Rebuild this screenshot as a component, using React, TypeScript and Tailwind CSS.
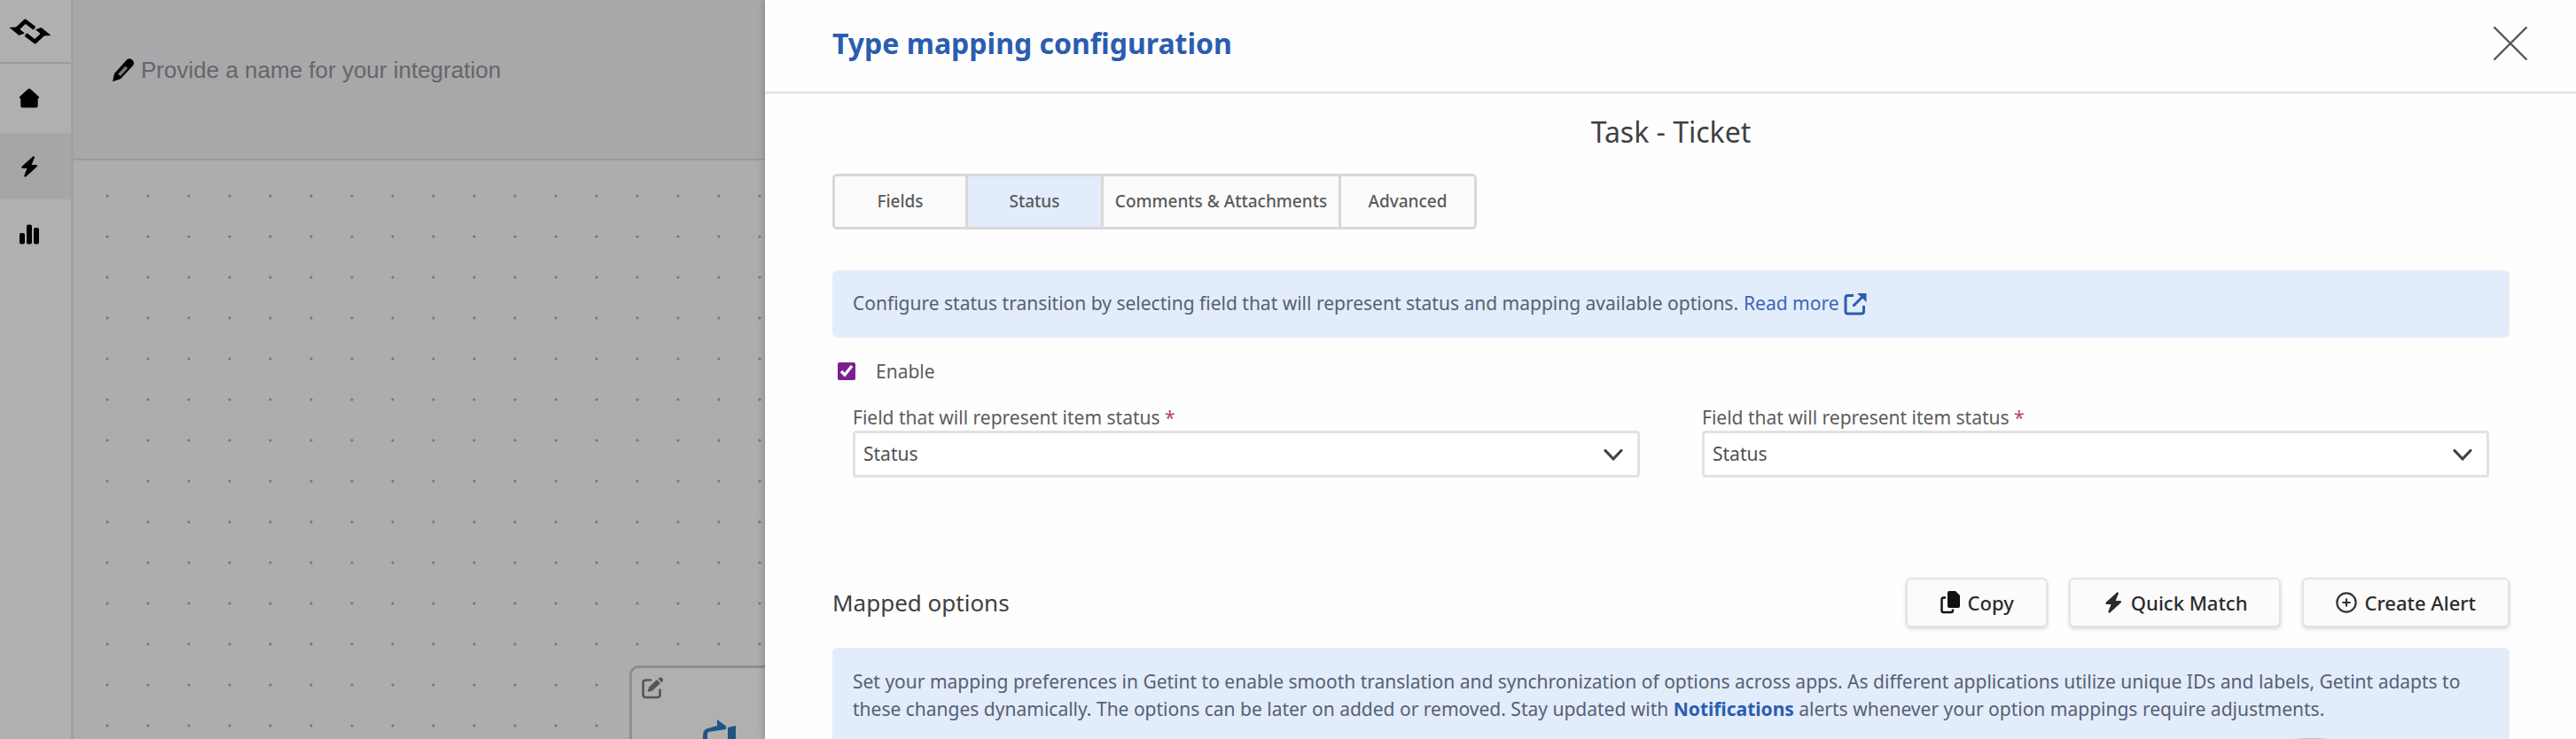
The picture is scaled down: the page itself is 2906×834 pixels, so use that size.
import { useState } from 'react'

type TabId = 'fields' | 'status' | 'comments' | 'advanced'

const TABS: { id: TabId; label: string; width: string }[] = [
  { id: 'fields', label: 'Fields', width: 'w-[150px]' },
  { id: 'status', label: 'Status', width: 'w-[153px]' },
  { id: 'comments', label: 'Comments & Attachments', width: 'w-[268px]' },
  { id: 'advanced', label: 'Advanced', width: 'w-[150px]' },
]

function Logo() {
  return (
    <svg width="48" height="33" viewBox="0 0 48 33" fill="none" stroke="#000" strokeWidth="4.600" strokeLinejoin="round">
      <path d="M29 13 L18.500 5 L9 14 L12 17" />
      <path d="M19 20 L29.500 28 L39 19 L36 16" />
      <path d="M0.500 12 L9 11.500 L18 18.500 L11.500 21 Z M47.500 21 L39 21.500 L30 14.500 L36.500 12 Z" fill="#000" stroke="none" />
    </svg>
  )
}

function HomeIcon() {
  return (
    <svg width="24" height="24" viewBox="0 0 24 24" fill="#000">
      <path d="M10.600 1.600 L1 10.200 Q0.300 12 2.300 12.300 V20.500 Q2.300 22.500 4.300 22.500 H19.700 Q21.700 22.500 21.700 20.500 V12.300 Q23.700 12 23 10.200 L13.400 1.600 Q12 0.500 10.600 1.600 Z" />
    </svg>
  )
}

function BoltIcon() {
  return (
    <svg width="24" height="26" viewBox="0 0 24 24" fill="currentColor">
      <path d="M16.500 0.300 L3.500 12 Q2.600 13.700 4.600 14 H9.500 L6.300 22.300 Q6.400 24.200 8.200 23.500 L20.800 12 Q21.800 10.300 19.700 10 H14.600 L18 1.800 Q18 0 16.500 0.300 Z" />
    </svg>
  )
}

function ChartIcon() {
  return (
    <svg width="24" height="24" viewBox="0 0 24 24" fill="#000">
      <rect x="1" y="11" width="6" height="12.500" rx="2" />
      <rect x="9" y="1.500" width="6" height="22" rx="2" />
      <rect x="17" y="5" width="6" height="18.500" rx="2" />
    </svg>
  )
}

function Sidebar() {
  return (
    <nav className="flex w-[83px] shrink-0 flex-col border-r-[3px] border-[#a0a0a0] bg-[#b0b0b0]">
      <a href="#" aria-label="Getint" className="flex h-[72px] items-center border-b-2 border-[#9c9c9c] pl-[10px]">
        <Logo />
      </a>
      <a href="#" aria-label="Home" className="flex h-[78px] items-center pl-[21px]">
        <HomeIcon />
      </a>
      <a href="#" aria-label="Integrations" className="flex h-[75px] items-center bg-[#a6a6a6] pl-[21px]">
        <BoltIcon />
      </a>
      <a href="#" aria-label="Reports" className="flex h-[78px] items-center pl-[21px]">
        <ChartIcon />
      </a>
    </nav>
  )
}

// Node placed on the canvas, partly hidden behind the drawer
function IntegrationCard() {
  return (
    <div className="absolute left-[710px] top-[751px] h-[200px] w-[300px] rounded-[10px] border-[3px] border-[#8f8f8f] bg-[#b0b0b0] pl-[11px] pt-[10px]">
      <svg width="25" height="25" viewBox="0 0 25 25" fill="none">
        <path d="M10 3.500 H4.500 Q1.500 3.500 1.500 6.500 V20 Q1.500 23 4.500 23 H17.500 Q20.500 23 20.500 20 V14.500" stroke="#555" strokeWidth="2.600" strokeLinecap="round" />
        <path d="M6.500 17 L8 11.500 L17 3 L21 7 L12 15.500 Z M18.500 2 L20 0.800 Q21.500 0 23 1.300 Q24.800 3 23.800 4.500 L22.300 6 Z" fill="#555" />
      </svg>
      <svg className="ml-[69px] mt-[23px]" width="38" height="40" viewBox="0 0 38 40">
        <path d="M0 40 V18 Q0 12 4 10.500 L16 7 V0 L26 7.500 V11 L6 14 Q5 15 5 18 V40 Z M28 9 L37 7 V40 H28 Z" fill="#1f5485" />
      </svg>
    </div>
  )
}

function Workspace() {
  const [name, setName] = useState('')

  return (
    <main className="flex min-w-0 flex-1 flex-col bg-[#adadad]">
      <header className="flex h-[181px] shrink-0 items-start border-b-2 border-[#9b9b9d] bg-[#a8a8aa] pl-[43px] pt-[59px]">
        <label htmlFor="integration-name" aria-label="Integration name" className="flex h-10 items-center">
          <svg width="26" height="28" viewBox="0 0 26 28">
            <path d="M1 27 L3 18 L17 2.500 Q20 0 23 2.500 Q26.500 5.500 24 9 L10 24 Z" fill="#000" />
            <path d="M7 18.500 L15.500 9.500 L18 12 L10 21 Z" fill="#777" />
          </svg>
        </label>
        <input
          id="integration-name"
          type="text"
          value={name}
          onChange={(e) => setName(e.target.value)}
          placeholder="Provide a name for your integration"
          className="ml-[7px] h-10 w-[600px] bg-transparent font-['Liberation_Sans',sans-serif] text-[26px] text-[#555] outline-none placeholder:text-[#666668]"
        />
      </header>
      <div className="flex-1 bg-[radial-gradient(circle_at_center,#777_1px,transparent_2px)] bg-[length:46px_46px] bg-[position:15px_17px]" />
    </main>
  )
}

function StatusSelect({ id }: { id: string }) {
  return (
    <div className="flex-1">
      <label htmlFor={id} className="block text-[21px] leading-[30px] text-[#5c5c5c]">
        Field that will represent item status <span className="text-[#b04a55]">*</span>
      </label>
      <div className="relative">
        <select
          id={id}
          className="block h-[53px] w-full appearance-none rounded-[4px] border-[3px] border-[#e2e2e2] bg-white pl-[9px] text-[21px] text-[#505050]"
        >
          <option>Status</option>
        </select>
        <svg className="pointer-events-none absolute right-[18px] top-[20px]" width="24" height="16" viewBox="0 0 24 16" fill="none">
          <path d="M3 2.500 L12 12 L21 2.500" stroke="#444" strokeWidth="3.200" strokeLinecap="round" strokeLinejoin="round" />
        </svg>
      </div>
    </div>
  )
}

function CopyIcon() {
  return (
    <svg width="24" height="26" viewBox="0 0 24 26">
      <path d="M11 0 H18 L23 5 V17 Q23 19 21 19 H11 Q9 19 9 17 V2 Q9 0 11 0 Z" fill="#111" />
      <path d="M7 7.500 H4.500 Q2.500 7.500 2.500 9.500 V22 Q2.500 24 4.500 24 H13 Q15 24 15 22 V20.500" fill="none" stroke="#111" strokeWidth="2.400" />
    </svg>
  )
}

function PlusCircleIcon() {
  return (
    <svg width="24" height="24" viewBox="0 0 26 26" fill="none" stroke="#333" strokeWidth="2.400">
      <circle cx="13" cy="13" r="11.500" />
      <path d="M13 8 V18 M8 13 H18" />
    </svg>
  )
}

function ActionButton({ icon, label }: { icon: React.ReactNode; label: string }) {
  return (
    <button className="flex h-[56px] items-center gap-2 rounded-[6px] border-2 border-[#e3e3e3] bg-[#fbfbfb] px-[36px] text-[22px] font-medium text-[#2b2b2b] shadow-[0_2px_4px_rgba(0,0,0,0.15)]">
      {icon}
      {label}
    </button>
  )
}

function Drawer() {
  const [activeTab, setActiveTab] = useState<TabId>('status')
  const [enabled, setEnabled] = useState(true)

  return (
    <section className="absolute inset-y-0 left-[863px] right-0 overflow-hidden bg-[#fefefe] shadow-[0_0_8px_rgba(0,0,0,0.25)]">
      <header className="flex h-[106px] items-center justify-between border-b-[3px] border-[#e6e6e6] pb-[6px] pl-[76px] pr-[54px]">
        <h1 className="text-[32px] font-bold text-[#2a5db0]">Type mapping configuration</h1>
        <button aria-label="Close">
          <svg width="40" height="40" viewBox="0 0 40 40" fill="none" stroke="#555" strokeWidth="2.400">
            <path d="M1.500 1.500 L38.500 38.500 M38.500 1.500 L1.500 38.500" />
          </svg>
        </button>
      </header>

      <div className="pl-[76px] pr-[75px] pt-[21px]">
        <h2 className="text-center text-[32px] leading-[44px] text-[#404040]">Task - Ticket</h2>

        {/* Tabs */}
        <div className="mt-[25px] flex h-[63px] w-max divide-x-3 divide-[#d8d8d8] overflow-hidden rounded-[5px] border-[3px] border-[#d8d8d8]">
          {TABS.map((tab) => (
            <button
              key={tab.id}
              onClick={() => setActiveTab(tab.id)}
              className={`${tab.width} text-[19px] font-medium text-[#5a5a5a] ${
                activeTab === tab.id ? 'bg-[#e3ecfb]' : 'bg-[#fbfbfb]'
              }`}
            >
              {tab.label}
            </button>
          ))}
        </div>

        <p className="mt-[46px] flex h-[76px] items-center rounded-[6px] bg-[#e3ecfb] px-[23px] text-[21px] text-[#566074]">
          Configure status transition by selecting field that will represent status and mapping available options.
          <a href="#" className="ml-[6px] flex items-center gap-[5px] text-[#3a68b5]">
            Read more
            <svg width="26" height="26" viewBox="0 0 26 26" fill="none" stroke="#2a5db0" strokeWidth="3">
              <path d="M11 3.500 H4.500 Q2 3.500 2 6 V21.500 Q2 24 4.500 24 H19.500 Q22.500 24 22.500 21.500 V15" />
              <path d="M10.500 15.500 L22 4" />
              <path d="M15 1 H25.500 V11 Z" fill="#2a5db0" stroke="none" />
            </svg>
          </a>
        </p>

        <label className="mt-[23px] flex items-center gap-[23px] pl-[6px] text-[21px] leading-[30px] text-[#5c5c5c]">
          <input
            type="checkbox"
            checked={enabled}
            onChange={(e) => setEnabled(e.target.checked)}
            className="h-5 w-5 accent-[#7b1f8f]"
          />
          Enable
        </label>

        <div className="mt-[22px] flex gap-[70px] px-[23px]">
          <StatusSelect id="left-status" />
          <StatusSelect id="right-status" />
        </div>

        {/* Mapped options */}
        <div className="mt-[113px] flex items-center justify-between">
          <h3 className="text-[26px] text-[#404040]">Mapped options</h3>
          <div className="flex gap-6">
            <ActionButton icon={<CopyIcon />} label="Copy" />
            <ActionButton icon={<BoltIcon />} label="Quick Match" />
            <ActionButton icon={<PlusCircleIcon />} label="Create Alert" />
          </div>
        </div>

        <p className="mt-[23px] rounded-[6px] bg-[#e3ecfb] px-[23px] pb-10 pt-[23px] text-[21px] leading-[31px] text-[#566074]">
          Set your mapping preferences in Getint to enable smooth translation and synchronization of options across apps. As
          different applications utilize unique IDs and labels, Getint adapts to these changes dynamically. The options can be
          later on added or removed. Stay updated with{' '}
          <a href="#" className="font-bold text-[#2a5db0]">
            Notifications
          </a>{' '}
          alerts whenever your option mappings require adjustments.
        </p>
      </div>

      {/* Top edge of the floating bubble below the fold */}
      <div className="absolute right-[99px] top-full -mt-px h-[400px] w-[400px] rounded-full bg-[#b4bccd]" />
    </section>
  )
}

export default function App() {
  return (
    <div className="relative flex h-screen overflow-hidden font-['Noto_Sans',sans-serif]">
      <Sidebar />
      <Workspace />
      <IntegrationCard />
      <Drawer />
    </div>
  )
}
